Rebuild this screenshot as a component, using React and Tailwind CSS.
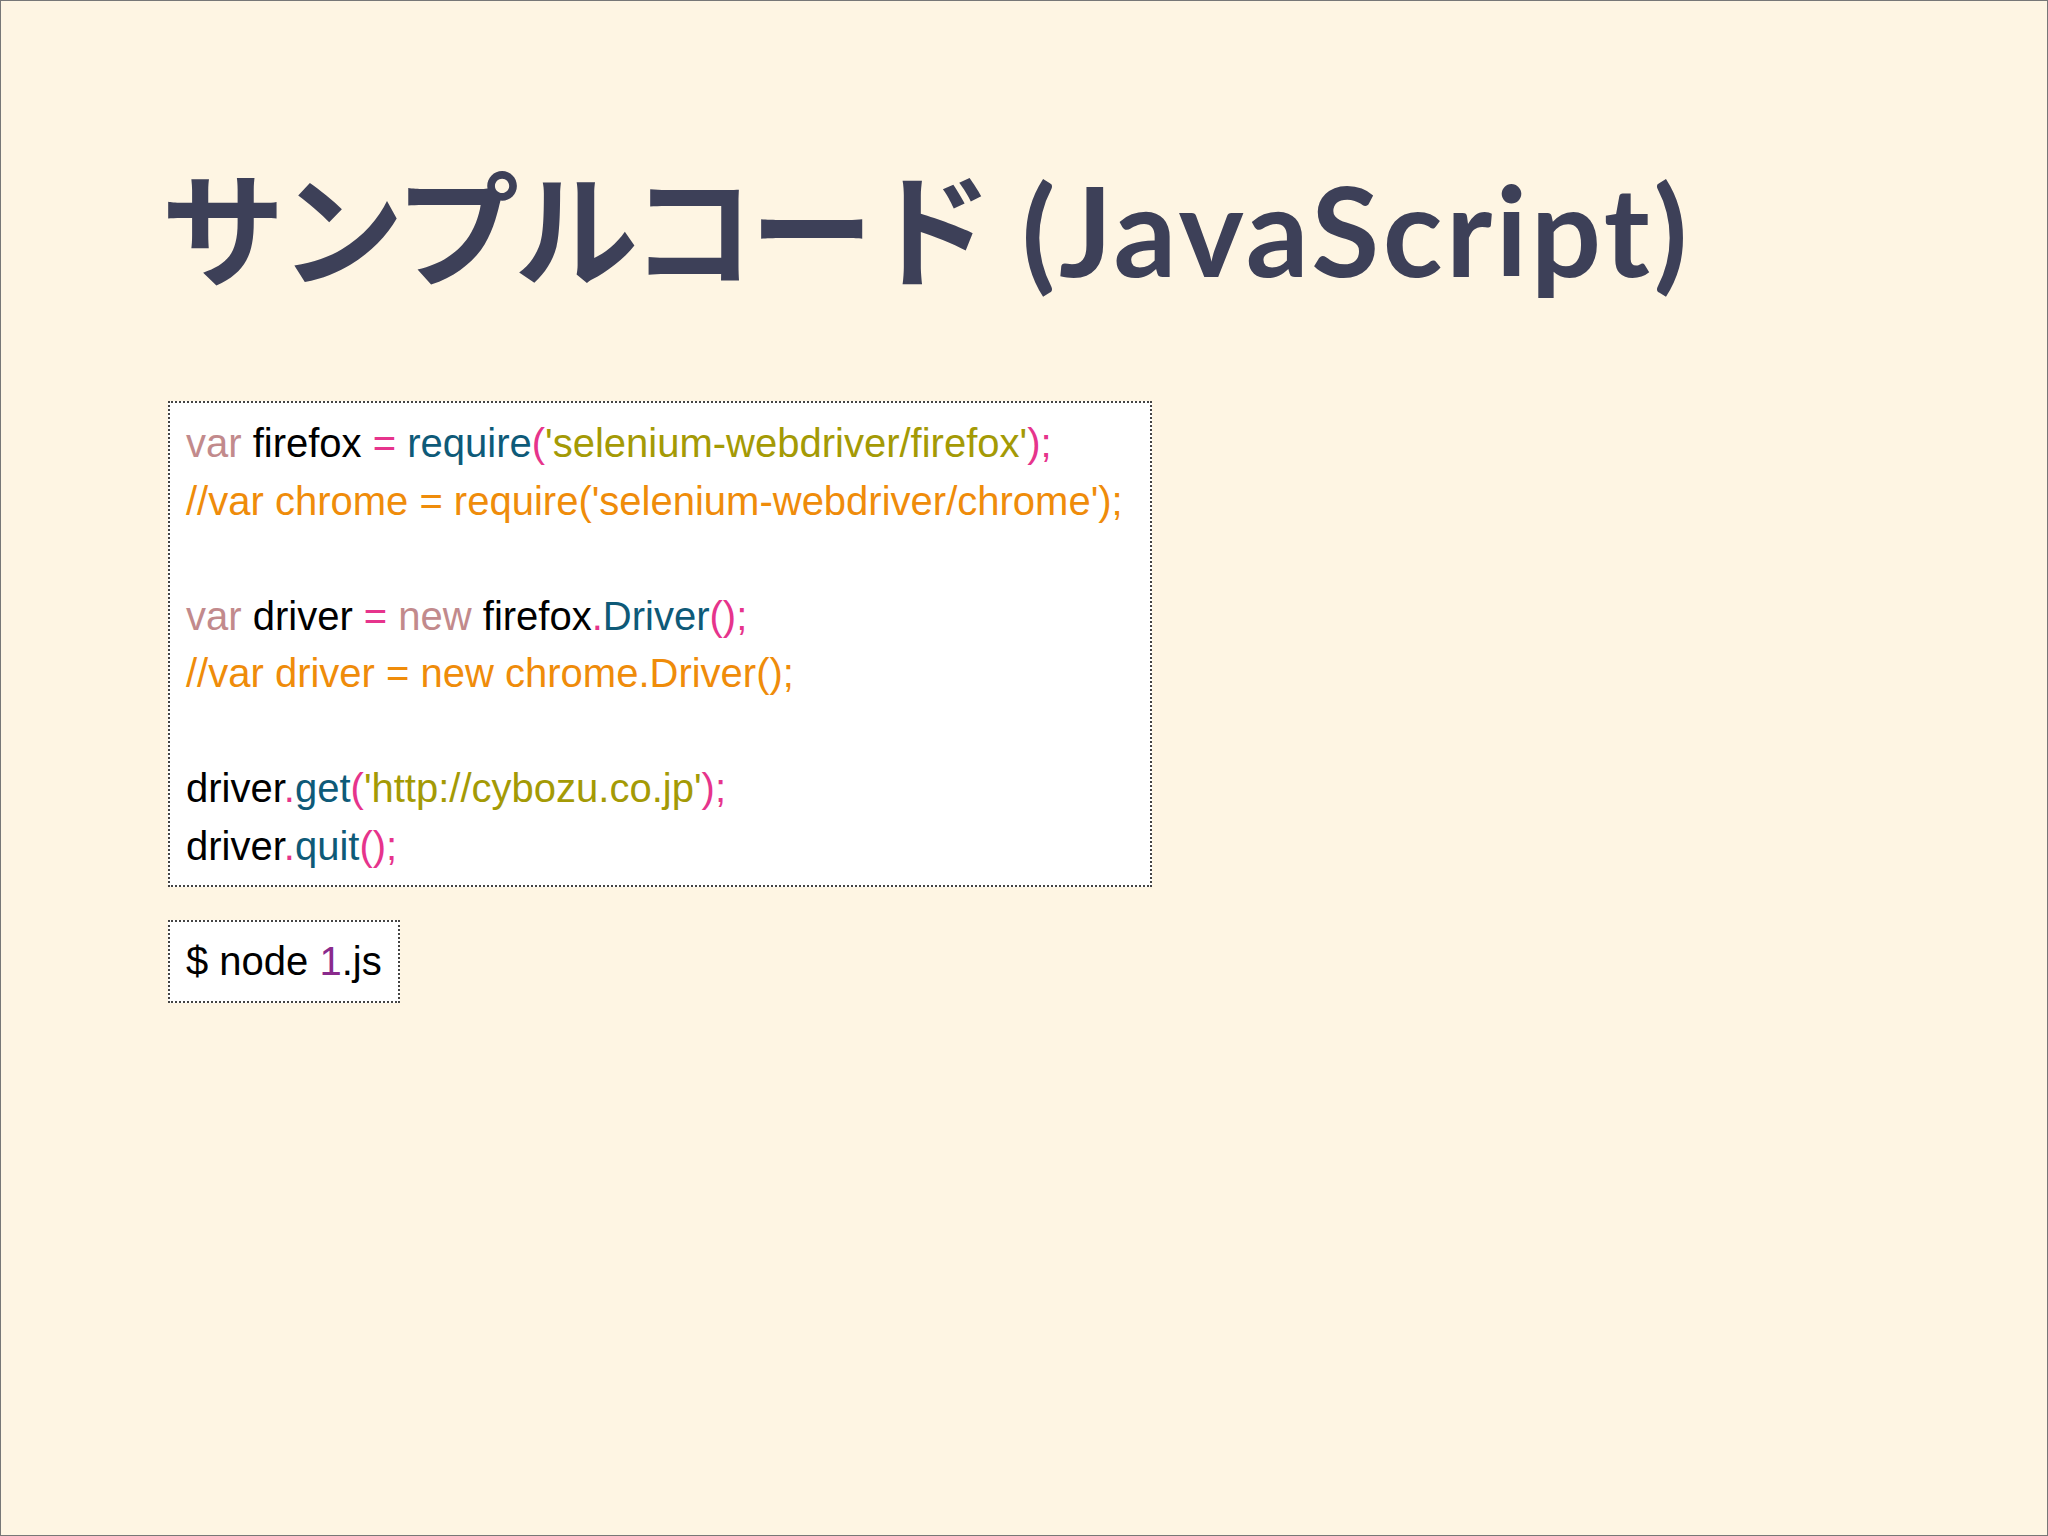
export default function App() {
  const V = "text-[#c28a8c]", I = "text-black", P = "text-[#e6348c]", T = "text-[#0e5a78]", S = "text-[#a49a05]", C = "text-[#ef8c0a]";
  return (
    <div className="w-[2048px] h-[1536px] bg-[#fef5e3] border border-[#777] overflow-hidden">
      <h1 className="ml-[160px] mt-[148px] text-[#3d4058] text-[124px] leading-[160px] font-bold whitespace-pre" style={{ fontFamily: "Lato, 'Noto Sans CJK JP', sans-serif" }}>
        <span className="tracking-[-5px]">サンプルコード</span><span className="tracking-[3.5px]"> (JavaScript)</span>
      </h1>
      <div className="mt-[92px] ml-[167px] w-[984px] border-2 border-dotted border-[#444] bg-white pl-[16px] pt-[12px] pb-[10px] text-[40px] leading-[57.5px] whitespace-pre" style={{ fontFamily: "'Liberation Sans', Arial, sans-serif" }}>
        <div><span className={V}>var</span><span className={I}> firefox </span><span className={P}>=</span><span className={T}> require</span><span className={P}>(</span><span className={S}>'selenium-webdriver/firefox'</span><span className={P}>);</span></div>
        <div className={C}>//var chrome = require('selenium-webdriver/chrome');</div>
        <div>&nbsp;</div>
        <div><span className={V}>var</span><span className={I}> driver </span><span className={P}>=</span><span className={V}> new</span><span className={I}> firefox</span><span className={P}>.</span><span className={T}>Driver</span><span className={P}>();</span></div>
        <div className={C}>//var driver = new chrome.Driver();</div>
        <div>&nbsp;</div>
        <div><span className={I}>driver</span><span className={P}>.</span><span className={T}>get</span><span className={P}>(</span><span className={S}>'http://cybozu.co.jp'</span><span className={P}>);</span></div>
        <div><span className={I}>driver</span><span className={P}>.</span><span className={T}>quit</span><span className={P}>();</span></div>
      </div>
      <div className="mt-[33px] ml-[167px] w-[232px] h-[83px] border-2 border-dotted border-[#444] bg-white pl-[16px] text-[40px] leading-[79px]" style={{ fontFamily: "'Liberation Sans', Arial, sans-serif" }}>
        <span className="text-black">$ node </span><span className="text-[#8a2a8c]">1</span><span className="text-black">.js</span>
      </div>
    </div>
  );
}
